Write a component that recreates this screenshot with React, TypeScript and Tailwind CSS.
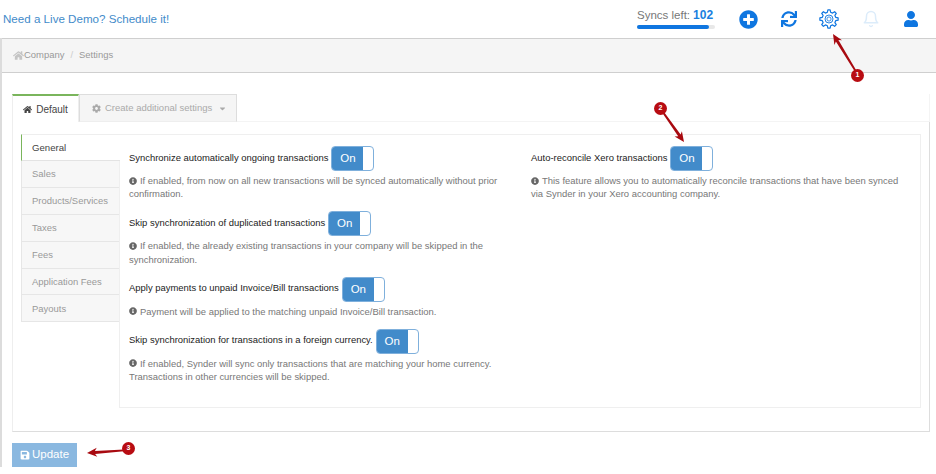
import React from "react";
import { FaHome, FaCog, FaInfoCircle, FaSave, FaPlusCircle, FaSync, FaUser, FaCaretDown } from "react-icons/fa";
import { LuBell } from "react-icons/lu";

function Toggle() {
  return (
    <span className="inline-flex h-[25px] w-[43px] shrink-0 overflow-hidden rounded-[4px] border border-[#7fb0dc] bg-white">
      <span className="flex w-[31px] items-center justify-center bg-[#428bca] text-[11.5px] text-white">On</span>
    </span>
  );
}

function Setting({ label, help, mb }: { label: string; help: React.ReactNode; mb: string }) {
  return (
    <div className={mb}>
      <div className="flex h-[25px] items-center gap-[3px] text-[9.45px] text-[#222]">
        <span className="pb-[2px] leading-[14px]">{label}</span>
        <Toggle />
      </div>
      <p className="mt-[3px] text-[9.45px] leading-[13.4px] text-[#777]">
        <FaInfoCircle className="mr-[3px] inline-block size-[8px] align-[-0.5px] text-[#666]" />
        {help}
      </p>
    </div>
  );
}

function GearIcon() {
  const pts: string[] = [];
  const teeth = 8;
  for (let i = 0; i < teeth; i++) {
    const a = (i / teeth) * Math.PI * 2;
    const step = Math.PI / teeth;
    const p = (r: number, t: number) => `${(10 + r * Math.cos(t)).toFixed(2)},${(10 + r * Math.sin(t)).toFixed(2)}`;
    pts.push(p(6.9, a - step * 0.62), p(9.2, a - step * 0.32), p(9.2, a + step * 0.32), p(6.9, a + step * 0.62));
  }
  return (
    <svg viewBox="0 0 20 20" fill="none" stroke="#0f76e0" strokeWidth="1.2" strokeLinejoin="round" className="ml-[22px] size-[20px]">
      <polygon points={pts.join(" ")} />
      <circle cx="10" cy="10" r="4" strokeWidth="0.9" />
      <circle cx="10" cy="10" r="2.1" strokeWidth="0.8" />
    </svg>
  );
}

function Arrow({ x1, y1, x2, y2 }: { x1: number; y1: number; x2: number; y2: number }) {
  const dx = x2 - x1;
  const dy = y2 - y1;
  const len = Math.hypot(dx, dy);
  const ux = dx / len;
  const uy = dy / len;
  const nx = -uy;
  const ny = ux;
  const pt = (along: number, side: number) =>
    `${(x1 + ux * along + nx * side).toFixed(1)},${(y1 + uy * along + ny * side).toFixed(1)}`;
  const b = len - 10;
  return (
    <polygon
      fill="#a80a10"
      points={[pt(0, -0.8), pt(b + 2, -1.5), pt(b, -4.5), pt(len, 0), pt(b, 4.5), pt(b + 2, 1.5), pt(0, 0.8)].join(" ")}
    />
  );
}

const side = ["Sales", "Products/Services", "Taxes", "Fees", "Application Fees", "Payouts"];

export default function App() {
  return (
    <div className="relative h-[474px] w-[936px] overflow-hidden bg-white font-['Liberation_Sans',Arial,sans-serif]">
      <header className="flex h-[38px] items-center justify-between pl-[3px] pr-[17px]">
        <a className="text-[11.6px] text-[#428bca]">Need a Live Demo? Schedule it!</a>
        <div className="flex items-center">
          <div className="mr-[22px] w-[79px] -translate-x-[1px] -translate-y-[1px]">
            <div className="flex items-baseline gap-[3px] text-[11.5px] leading-[14px] text-[#777]">
              <span>Syncs left:</span>
              <span className="text-[12px] font-bold text-[#1a7fe0]">102</span>
            </div>
            <div className="mt-[3px] h-[4px] w-[78px] rounded-full bg-[#e8e8e8]">
              <div className="h-full w-[72px] rounded-full bg-[#0f76e0]" />
            </div>
          </div>
          <FaPlusCircle className="size-[19px] text-[#0f76e0]" />
          <FaSync className="ml-[23px] size-[16px] text-[#0f76e0]" />
          <GearIcon />
          <LuBell className="ml-[23px] size-[18px] text-[#dcecfa]" />
          <FaUser className="ml-[23px] size-[16px] text-[#0f76e0]" />
        </div>
      </header>

      <div className="flex">
        <div className="w-[2px] shrink-0 bg-[#dcdcdc]" />
        <div className="min-w-0 flex-1">
          <nav className="flex h-[35px] items-center border-y border-[#cfcfcf] bg-[#f5f5f5] pb-[1px] pl-[11px] text-[9.45px] text-[#999]">
            <FaHome className="size-[11px] text-[#c4c4c4]" />
            <span>Company</span>
            <span className="mx-[6px] text-[#ccc]">/</span>
            <span>Settings</span>
          </nav>

          <div className="ml-[10px] mr-[6px] mt-[21px]">
            <div className="flex h-[28px] items-stretch">
              <div className="flex w-[67px] items-center justify-center gap-[4px] border-x border-t-2 border-[#eee] border-t-[#7ab55c] text-[10px] text-[#444]">
                <FaHome className="size-[9px] text-[#444]" />
                Default
              </div>
              <div className="flex w-[158px] items-center gap-[4px] border border-[#ddd] border-b-[#eee] bg-[#f5f5f5] pl-[12px] text-[9.5px] text-[#aaa]">
                <FaCog className="size-[9px] text-[#aaa]" />
                Create additional settings
                <FaCaretDown className="ml-[2px] size-[9px] text-[#aaa]" />
              </div>
              <div className="flex-1 border-b border-r border-[#f4f4f4]" />
            </div>
            <div className="flex border-x border-b border-[#ddd] border-l-[#eee] pb-[23px] pl-[8px] pr-[8px] pt-[12px]">
              <div className="w-[98px] shrink-0">
                <div className="relative z-10 -mr-px flex h-[27px] items-center border-y border-l border-[#eee] border-b-[#e3e3e3] border-l-[#7ab55c] bg-white pl-[10px] pt-[1px] text-[9.6px] text-[#444]">
                  General
                </div>
                {side.map((s) => (
                  <div key={s} className="flex h-[26.9px] items-center border-b border-l border-[#e6e6e6] bg-[#f7f7f7] pl-[10px] pt-[1px] text-[9.45px] text-[#999]">
                    {s}
                  </div>
                ))}
              </div>
              <div className="grid h-[274px] flex-1 grid-cols-[402px_1fr] border border-[#efefef] pl-[9px] pt-[11px]">
                <div>
                  <Setting
                    mb="mb-[10.6px]"
                    label="Synchronize automatically ongoing transactions"
                    help="If enabled, from now on all new transactions will be synced automatically without prior confirmation."
                  />
                  <Setting
                    mb="mb-[10.6px]"
                    label="Skip synchronization of duplicated transactions"
                    help="If enabled, the already existing transactions in your company will be skipped in the synchronization."
                  />
                  <Setting
                    mb="mb-[10.6px]"
                    label="Apply payments to unpaid Invoice/Bill transactions"
                    help="Payment will be applied to the matching unpaid Invoice/Bill transaction."
                  />
                  <Setting
                    mb=""
                    label="Skip synchronization for transactions in a foreign currency."
                    help="If enabled, Synder will sync only transactions that are matching your home currency. Transactions in other currencies will be skipped."
                  />
                </div>
                <div className="w-[375px]">
                  <Setting
                    mb=""
                    label="Auto-reconcile Xero transactions"
                    help="This feature allows you to automatically reconcile transactions that have been synced via Synder in your Xero accounting company."
                  />
                </div>
              </div>
            </div>
          </div>

          <button className="ml-[10px] mt-[11px] flex h-[24px] w-[65px] items-center justify-center gap-[2px] bg-[#8ab8e0] text-[11.5px] text-white">
            <FaSave className="size-[10px]" />
            Update
          </button>
        </div>
      </div>

      <svg className="pointer-events-none absolute left-0 top-0" width="936" height="474" fill="none">
        <Arrow x1={858} y1={75} x2={833} y2={34} />
        <Arrow x1={660} y1={108} x2={684} y2={142} />
        <Arrow x1={129} y1={450} x2={87} y2={453} />
      </svg>
      <span className="absolute left-[851px] top-[69px] flex size-[13px] items-center justify-center rounded-full bg-[#b80c12] text-[7px] font-bold text-white">1</span>
      <span className="absolute left-[654px] top-[102px] flex size-[13px] items-center justify-center rounded-full bg-[#b80c12] text-[7px] font-bold text-white">2</span>
      <span className="absolute left-[122px] top-[442px] flex size-[13px] items-center justify-center rounded-full bg-[#b80c12] text-[7px] font-bold text-white">3</span>
    </div>
  );
}
